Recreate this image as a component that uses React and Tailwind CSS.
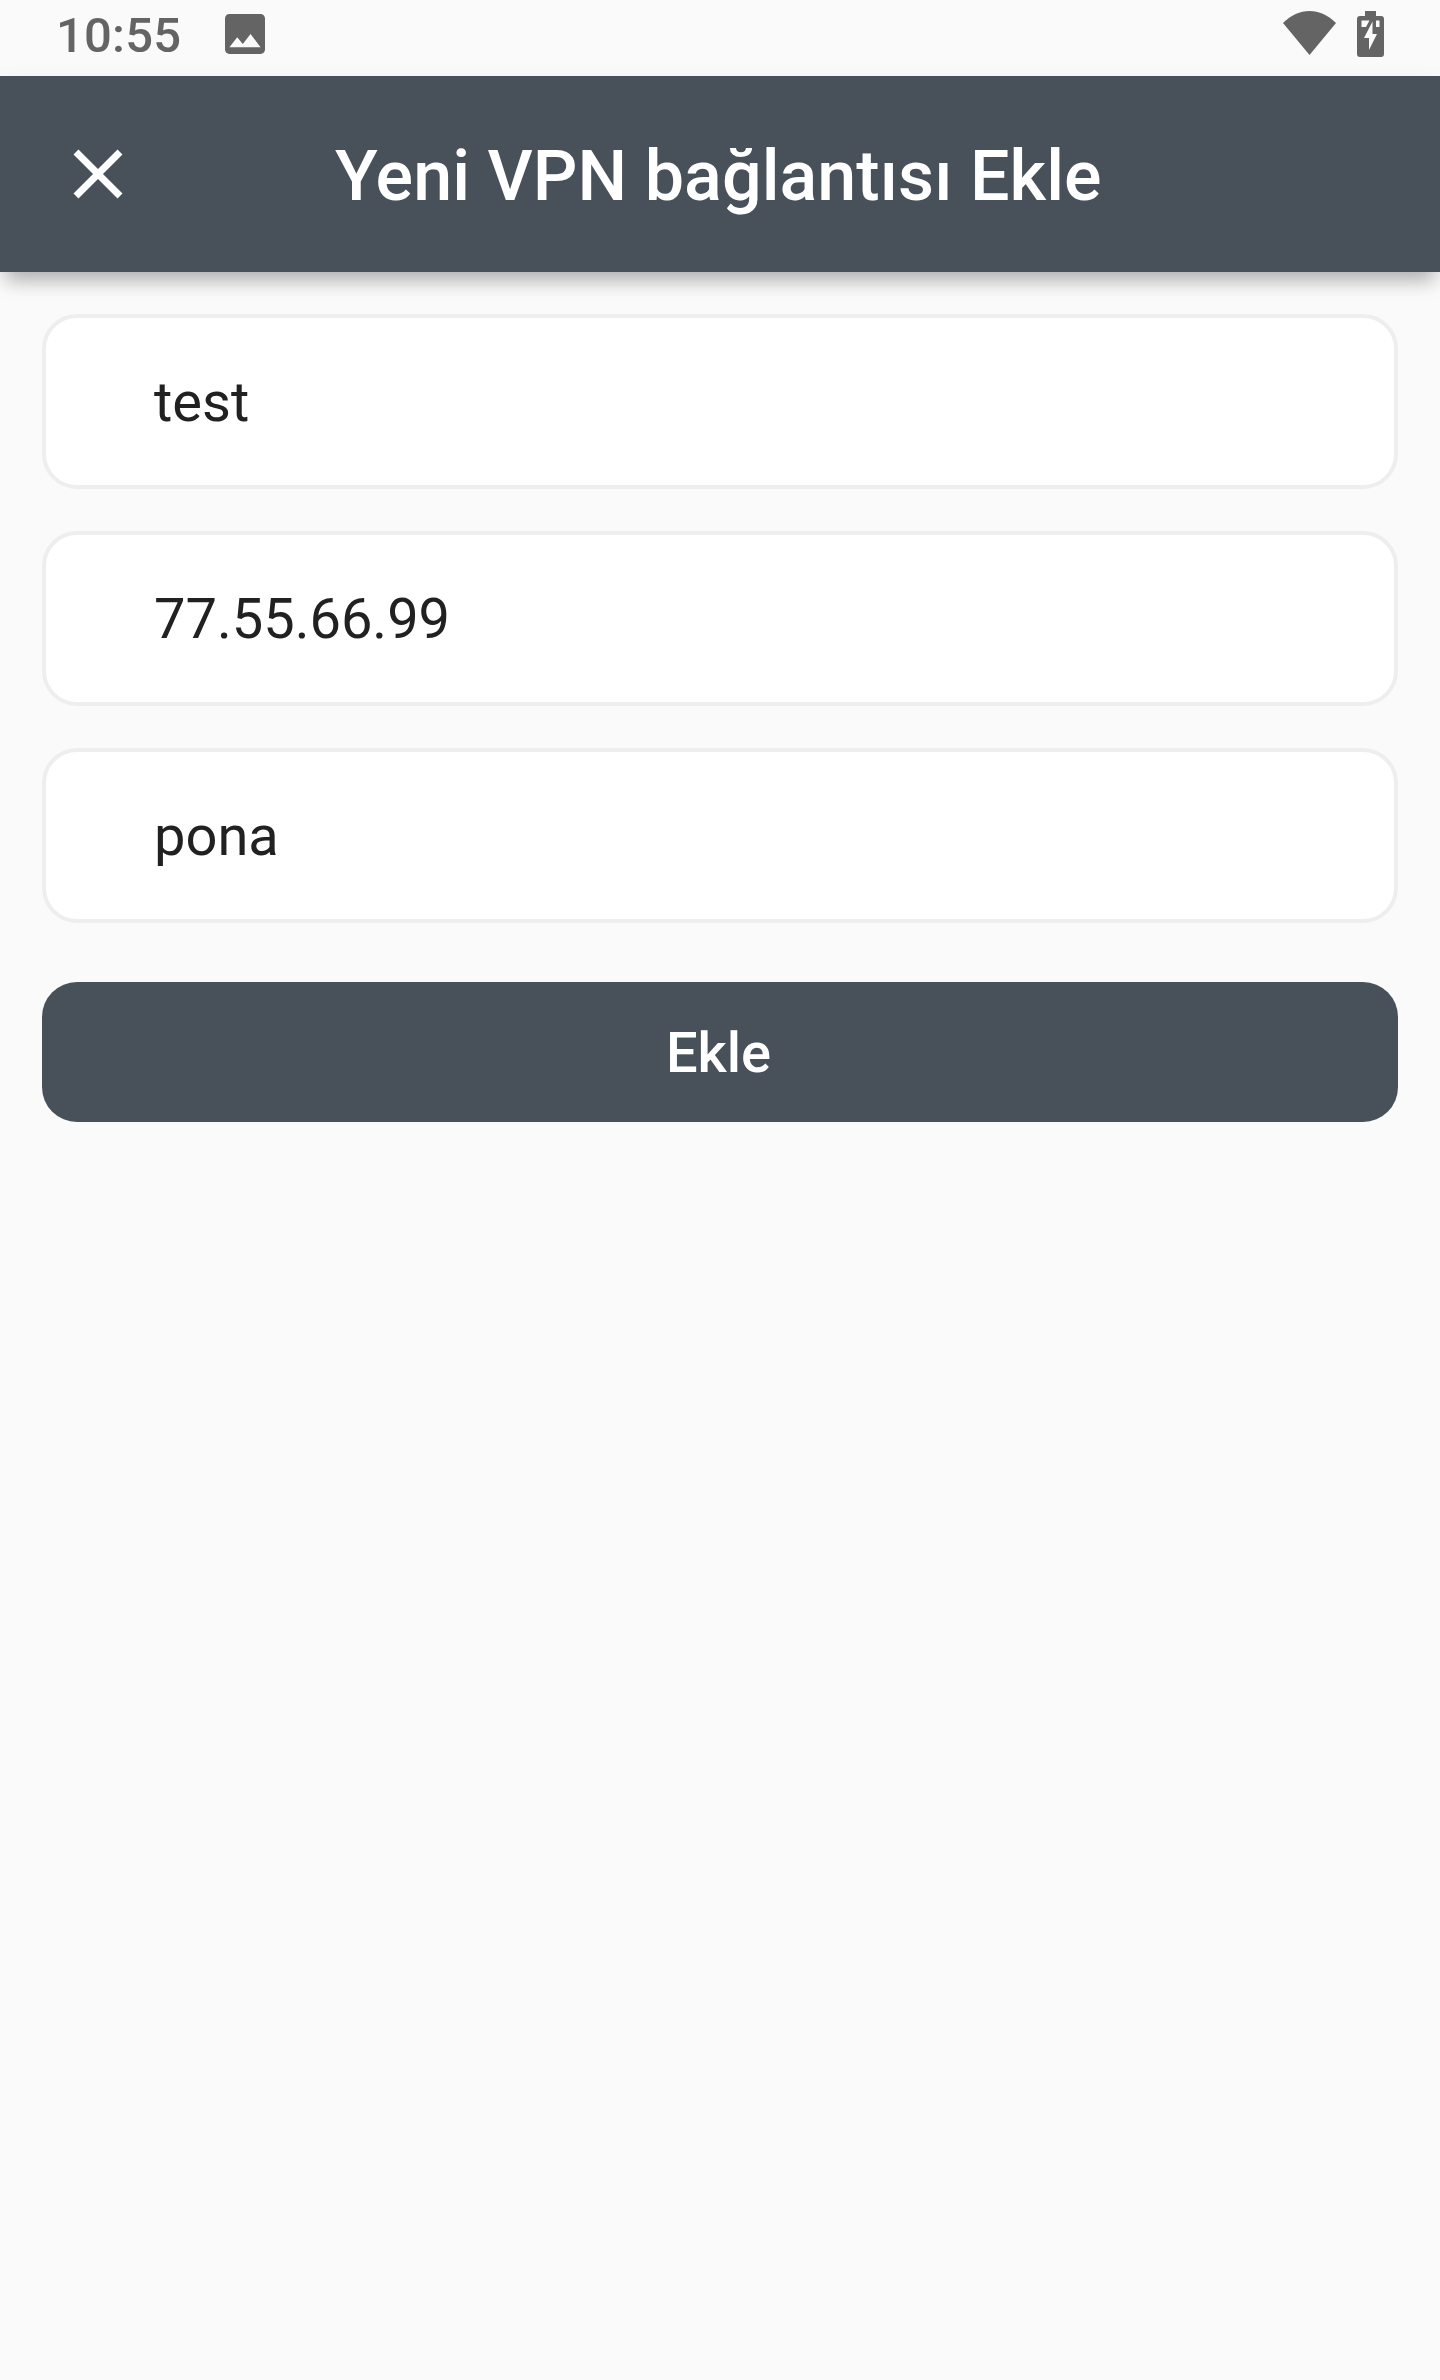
import React, { useState } from 'react';

const StatusBar = () => (
    <div className="flex h-[76px] items-start justify-between bg-[#fafafa] pr-[56px] pl-[56px] text-[#646464]">
        <div className="flex items-start gap-[44px]">
            <span className="text-[49px] font-medium leading-[72px] tracking-[0.2px]">10:55</span>
            <svg viewBox="3 3 18 18" className="mt-3.5 h-10 w-10" fill="currentColor">
                <path d="M21 19V5c0-1.1-.9-2-2-2H5c-1.1 0-2 .9-2 2v14c0 1.1.9 2 2 2h14c1.1 0 2-.9 2-2zM8.5 13.5l2.5 3.010L14.5 12l4.5 6H5l3.5-4.5z" />
            </svg>
        </div>
        <div className="flex items-start gap-[21px] pt-[11px]">
            <svg width="53" height="44" viewBox="0 0 53 44" fill="currentColor">
                <path d="M26.5 44 0 12C8 4 17 0 26.5 0S45 4 53 12Z" />
            </svg>
            <svg width="27" height="46" viewBox="0 0 27 46" fill="currentColor">
                <path fillRule="evenodd" d="M8 0h11v5h5q3 0 3 3v35q0 3-3 3H3q-3 0-3-3V8q0-3 3-3h5ZM4.5 9.500v6.500h4.500l3.500-6.500ZM15.500 10.500 7 27h5v12l8-16h-4.500ZM19 9.500v6.500h3.500V9.500Z" />
            </svg>
        </div>
    </div>
);

const Header = () => (
    <header className="relative z-10 flex h-[196px] items-center bg-[#485059] text-white shadow-[0_14px_18px_-6px_rgba(0,0,0,0.28),0_6px_24px_0_rgba(0,0,0,0.05)]">
        <button className="ml-[73px] flex h-[50px] w-[50px] items-center justify-center">
            <svg width="50" height="50" viewBox="0 0 50 50" stroke="currentColor" strokeWidth="7">
                <path d="M3 3 47 47M47 3 3 47" />
            </svg>
        </button>
        <h1 className="ml-[212px] pt-1 text-[70px] font-medium leading-none tracking-[0.06px] whitespace-nowrap">Yeni VPN bağlantısı Ekle</h1>
    </header>
);

const App = () => {
    const [form, setForm] = useState({ name: 'test', server: '77.55.66.99', user: 'pona' });

    return (
        <div className="min-h-[2380px] bg-[#fafafa] font-['Roboto',sans-serif]">
            <StatusBar />
            <Header />
            <form className="flex flex-col px-[42px] pt-[42px]" onSubmit={(e) => e.preventDefault()}>
                <div className="flex flex-col gap-[42px]">
                    {Object.keys(form).map((key) => (
                        <input
                            key={key}
                            value={form[key]}
                            onChange={(e) => setForm({ ...form, [key]: e.target.value })}
                            className="h-[175px] rounded-[35px] border-4 border-[#eeeeee] bg-white px-[108px] text-[56px] text-[#212121] outline-none"
                        />
                    ))}
                </div>
                <button className="mt-[59px] h-[140px] rounded-[35px] bg-[#485059] pt-px pr-[3px] text-[56px] font-medium text-white">
                    Ekle
                </button>
            </form>
        </div>
    );
};

export default App;
